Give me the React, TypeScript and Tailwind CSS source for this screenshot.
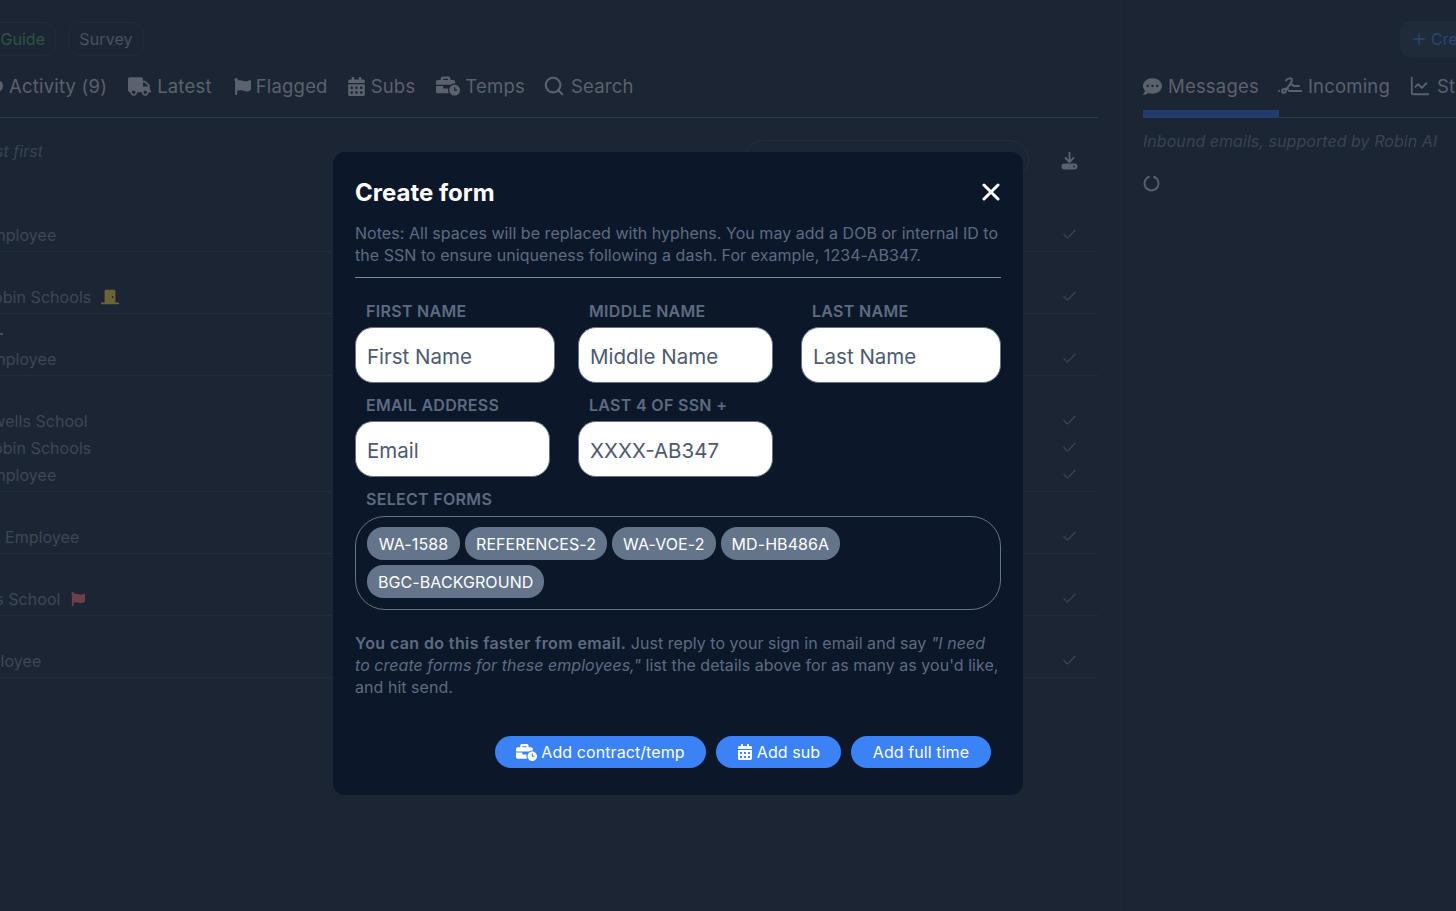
import React from "react";
import { FaTruck, FaFlag, FaCalendarAlt, FaBusinessTime, FaCommentDots, FaDoorClosed } from "react-icons/fa";
import { Search, ChartLine, Check, Plus } from "lucide-react";

const font = { fontFamily: "Inter, 'Liberation Sans', sans-serif" };

function Tab({ icon, label, className = "gap-[6px]" }: { icon: React.ReactNode; label: string; className?: string }) {
  return (
    <div className={"flex items-center text-[18.5px] leading-[28px] tracking-[0.2px] text-[#5b616d] whitespace-nowrap " + className}>
      {icon}
      <span>{label}</span>
    </div>
  );
}

function Line({ text, extra, ml }: { text: string; extra?: React.ReactNode; ml: string }) {
  return (
    <div className="flex h-[27px] items-center justify-between overflow-hidden pr-[20px]">
      <div className={"flex items-center gap-[10px] whitespace-nowrap text-[16px] tracking-[0.05px] text-[#3f4755] " + ml}>
        <span>{text}</span>
        {extra}
      </div>
      <Check size={17} strokeWidth={1.5} className="text-[#3f4755]" />
    </div>
  );
}

function Row({ children, h = "h-[62px]" }: { children: React.ReactNode; h?: string }) {
  return <div className={"flex flex-col justify-end border-b border-[#222c3b] pb-[3px] " + h}>{children}</div>;
}

function Field({ label, placeholder, w }: { label: string; placeholder: string; w: string }) {
  return (
    <div className={"flex flex-col " + w}>
      <label className="pl-[11px] text-[16px] font-semibold leading-[22px] tracking-[0.3px] text-[#5d6b82] uppercase">{label}</label>
      <input
        readOnly
        placeholder={placeholder}
        className="mt-[5px] h-[56px] w-full rounded-[18px] border border-[#64748b] bg-white px-[11px] pt-[2px] text-[20.5px] text-[#475569] placeholder:text-[#4d5a70] outline-none"
      />
    </div>
  );
}

function Chip({ label, className = "" }: { label: string; className?: string }) {
  return <span className={"flex h-[33px] items-center justify-center rounded-[16px] bg-[#64748b] px-[11px] text-[16px] tracking-[0.08px] text-white " + className}>{label}</span>;
}

function Btn({ icon, label, w }: { icon?: React.ReactNode; label: string; w: string }) {
  return (
    <button className={"flex h-[32px] items-center justify-center gap-[4px] rounded-full bg-[#3b82f6] text-[16px] tracking-[0.08px] text-white " + w}>
      {icon}
      {label}
    </button>
  );
}

function SignatureIcon() {
  return (
    <svg width="24" height="18" viewBox="0 0 24 18" fill="none" stroke="#5b616d" strokeWidth="2" strokeLinecap="round" strokeLinejoin="round">
      <circle cx="1" cy="14" r="1" fill="#5b616d" stroke="none" />
      <path d="M8 3.5 C9.5 1 14 0.5 14 3 C14 6 9 10 8 13.5 C7.5 16.5 4 16.5 4 14 C4 12 7 11.5 10 12" />
      <path d="M12 8 C14 6 15 9 16 9 L21 9" />
      <path d="M11 14 L23.5 14" />
    </svg>
  );
}

function DownloadIcon() {
  return (
    <svg width="17" height="18" viewBox="0 0 17 18" fill="none">
      <path d="M8.5 0.5 V9.5 M4.5 6 L8.5 10 L12.5 6" stroke="#5b616d" strokeWidth="1.8" strokeLinecap="round" strokeLinejoin="round" />
      <rect x="0.5" y="11.5" width="16" height="6" rx="3" fill="#5b616d" />
      <circle cx="13" cy="14.5" r="0.9" fill="#1c2534" />
    </svg>
  );
}

export default function App() {
  return (
    <div style={font} className="relative flex h-[911px] w-[1456px] overflow-hidden bg-[#1c2534]">
      <div className="w-[1098px] shrink-0">
        <div className="mt-[22px] flex h-[34px] gap-[12px]">
          <div className="ml-[-30px] flex w-[86px] items-center justify-end rounded-[12px] border border-[#222b3a] pr-[10px] text-[16px] text-[#2c5740]">Guide</div>
          <div className="flex w-[76px] items-center justify-center rounded-[12px] border border-[#222b3a] text-[16px] tracking-[0.1px] text-[#4b525f]">Survey</div>
        </div>
        <div className="flex h-[62px] items-start gap-[21px] border-b border-[#26395f] pt-[16px]">
          <Tab className="ml-[-14px] gap-[6px]" icon={<FaCommentDots size={17} className="text-[#5b616d]" />} label="Activity (9)" />
          <Tab icon={<FaTruck size={23} className="text-[#5b616d]" />} label="Latest" />
          <Tab className="ml-[1px] gap-[5px]" icon={<FaFlag size={17} className="text-[#5b616d]" />} label="Flagged" />
          <Tab className="ml-[-2px] gap-[5px]" icon={<FaCalendarAlt size={19} className="text-[#5b616d]" />} label="Subs" />
          <Tab className="gap-[5px]" icon={<FaBusinessTime size={24} className="text-[#5b616d]" />} label="Temps" />
          <Tab className="ml-[-3px] gap-[6px]" icon={<Search size={22} strokeWidth={2.3} className="text-[#5b616d]" />} label="Search" />
        </div>
        <div className="flex h-[72px] justify-between">
          <span className="ml-[-24px] mt-[21px] text-[16px] leading-[24px] tracking-[0.05px] text-[#3a4352] italic">Last first</span>
          <div className="ml-auto mt-[22px] h-[40px] w-[285px] rounded-[20px] border border-[#242e3d]" />
          <div className="ml-[32px] mr-[20px] mt-[34px]"><DownloadIcon /></div>
        </div>
        <Row><Line ml="ml-[-18px]" text="Employee" /></Row>
        <Row><Line ml="ml-[-17px]" text="Robin Schools" extra={<FaDoorClosed size={18} className="text-[#6d6434]" />} /></Row>
        <Row>
          <div className="h-[2px] w-[3px] translate-y-[-10px] bg-[#4a515e]" />
          <Line ml="ml-[-18px]" text="Employee" />
        </Row>
        <Row h="h-[116px]">
          <Line ml="ml-[-29px]" text="Howells School" />
          <Line ml="ml-[-17px]" text="Robin Schools" />
          <Line ml="ml-[-18px]" text="Employee" />
        </Row>
        <Row><Line ml="ml-[5px]" text="Employee" /></Row>
        <Row><Line ml="ml-[-37px]" text="Wells School" extra={<FaFlag size={14} className="text-[#6d3f48]" />} /></Row>
        <Row><Line ml="ml-[-33px]" text="Employee" /></Row>
      </div>

      <div className="ml-[22px] flex-1 border-l border-[#1f2838] pl-[22px]">
        <div className="flex h-[56px] justify-end">
          <div className="mr-[-60px] mt-[21px] flex h-[36px] w-[116px] items-center gap-[3px] rounded-[10px] bg-[#1f2a3a] pl-[10px] text-[16px] text-[#2a4675]">
            <Plus size={18} />Create
          </div>
        </div>
        <div className="relative mr-[-60px] flex h-[62px] items-start gap-[21px] border-b border-[#26395f] pt-[16px]">
          <Tab icon={<FaCommentDots size={19} className="text-[#5b616d]" />} label="Messages" />
          <Tab className="ml-[-2px] gap-[6px]" icon={<SignatureIcon />} label="Incoming" />
          <Tab className="ml-[-2px] gap-[6px]" icon={<ChartLine size={22} strokeWidth={2} className="text-[#5b616d]" />} label="Stats" />
          <div className="absolute bottom-[-1px] left-0 h-[8px] w-[136px] bg-[#233c6f]" />
        </div>
        <div className="mt-[11px] text-[16px] leading-[24px] tracking-[0.05px] whitespace-nowrap text-[#3a4352] italic">Inbound emails, supported by Robin AI</div>
        <svg className="mt-[22px]" width="17" height="17" viewBox="0 0 17 17" fill="none">
          <path d="M6 1.9 A7 7 0 1 0 11 1.9" stroke="#5b616d" strokeWidth="1.8" strokeLinecap="round" />
        </svg>
      </div>

      <div className="absolute left-[333px] top-[152px] h-[643px] w-[690px] rounded-[12px] bg-[#0d172a] px-[22px]">
        <div className="flex h-[58px] w-[646px] items-end justify-between pb-[1px]">
          <h2 className="text-[24px] font-bold leading-[32px] text-white">Create form</h2>
          <svg className="mb-[8px] mr-[1px]" width="18" height="18" viewBox="0 0 18 18" fill="none">
            <path d="M2 2 L16 16 M16 2 L2 16" stroke="#fff" strokeWidth="3" strokeLinecap="round" />
          </svg>
        </div>
        <p className="mt-[12px] w-[646px] text-[16px] leading-[22px] tracking-[0.04px] text-[#5d6b82]">
          Notes: All spaces will be replaced with hyphens. You may add a DOB or internal ID to the SSN to ensure uniqueness following a dash. For example, 1234-AB347.
        </p>
        <div className="mt-[11px] h-px w-[646px] bg-[#7b8aa3]" />
        <div className="mt-[22px] flex w-[646px]">
          <Field w="w-[200px]" label="First name" placeholder="First Name" />
          <Field w="ml-[23px] w-[195px]" label="Middle name" placeholder="Middle Name" />
          <Field w="ml-[28px] w-[200px]" label="Last name" placeholder="Last Name" />
        </div>
        <div className="mt-[11px] flex w-[646px]">
          <Field w="w-[195px]" label="Email address" placeholder="Email" />
          <Field w="ml-[28px] w-[195px]" label="Last 4 of SSN +" placeholder="XXXX-AB347" />
        </div>
        <div className="mt-[11px] pl-[11px] text-[16px] font-semibold leading-[22px] tracking-[0.3px] text-[#5d6b82] uppercase">Select forms</div>
        <div className="mt-[6px] flex h-[94px] w-[646px] flex-wrap content-start gap-x-[5px] gap-y-[5px] rounded-[30px] border border-[#64748b] px-[11px] pt-[10px]">
          <Chip className="w-[93px]" label="WA-1588" />
          <Chip label="REFERENCES-2" />
          <Chip label="WA-VOE-2" />
          <Chip label="MD-HB486A" />
          <Chip label="BGC-BACKGROUND" />
        </div>
        <p className="mt-[22px] w-[646px] text-[16px] leading-[22px] tracking-[0.04px] text-[#5d6b82]">
          <b className="font-semibold tracking-[0.38px]">You can do this faster from email.</b> Just reply to your sign in email and say <i>"I need to create forms for these employees,"</i> list the details above for as many as you'd like, and hit send.
        </p>
        <div className="mt-[38px] flex w-[636px] justify-end gap-[10px]">
          <Btn w="w-[211px]" icon={<FaBusinessTime size={21} />} label="Add contract/temp" />
          <Btn w="w-[125px]" icon={<FaCalendarAlt size={16} />} label="Add sub" />
          <Btn w="w-[140px]" label="Add full time" />
        </div>
      </div>
    </div>
  );
}
